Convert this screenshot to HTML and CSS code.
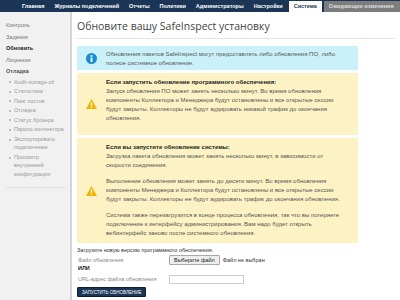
FILE: index.html
```html
<!DOCTYPE html>
<html lang="ru">
<head>
  <meta charset="UTF-8">
  <title>Обновление системы</title>
  <link rel="stylesheet" href="styles.css">
</head>
<body>
  <div class="topbar">
    <a class="nav-item">Главная</a>
    <a class="nav-item">Журналы подключений</a>
    <a class="nav-item">Отчеты</a>
    <a class="nav-item">Политики</a>
    <a class="nav-item">Администраторы</a>
    <a class="nav-item">Настройки</a>
    <a class="nav-item active">Система</a>
    <a class="nav-item pending">Ожидающие изменения</a>
  </div>

  <div class="layout">
    <div class="sidebar">
      <div class="side-link">Контроль</div>
      <div class="side-link">Задания</div>
      <div class="side-link current">Обновить</div>
      <div class="side-link">Лицензия</div>
      <div class="side-link heading">Отладка</div>
      <ul class="side-list">
        <li>Audit-storage-ctl</li>
        <li>Статистика</li>
        <li>Пинг хостов</li>
        <li>Отладка</li>
        <li>Статус брокера</li>
        <li>Пароль коллектора</li>
        <li>Экспортировать подключение</li>
        <li>Просмотр внутренней конфигурации</li>
      </ul>
      <div class="side-rule"></div>
    </div>

    <div class="content">
      <h1>Обновите вашу SafeInspect установку</h1>

      <div class="notice info">
        <div class="notice-icon">
          <svg width="11" height="11" viewBox="0 0 12 12">
            <circle cx="6" cy="6" r="6" fill="#1a8fd0"/>
            <circle cx="6" cy="3.2" r="1.1" fill="#fff"/>
            <rect x="5" y="5" width="2" height="4.8" fill="#fff"/>
          </svg>
        </div>
        <div class="notice-text">
          <p>Обновления пакетов SafeInspect могут предоставлять либо обновления ПО, либо полное системное обновление.</p>
        </div>
      </div>

      <div class="notice warn first">
        <div class="notice-icon">
          <svg width="11" height="10" viewBox="0 0 12 11">
            <path d="M6 0 L12 11 L0 11 Z" fill="#f0b400"/>
            <rect x="5.3" y="3.6" width="1.4" height="4" fill="#fff"/>
            <rect x="5.3" y="8.5" width="1.4" height="1.3" fill="#fff"/>
          </svg>
        </div>
        <div class="notice-text">
          <p><b>Если запустить обновление программного обеспечения:</b><br>
          Запуск обновления ПО может занять несколько минут. Во время обновления компоненты Коллектора и Менеджера будут остановлены и все открытые сессии будут закрыты. Коллекторы не будут аудировать никакой трафик до окончания обновления.</p>
        </div>
      </div>

      <div class="notice warn">
        <div class="notice-icon">
          <svg width="11" height="10" viewBox="0 0 12 11">
            <path d="M6 0 L12 11 L0 11 Z" fill="#f0b400"/>
            <rect x="5.3" y="3.6" width="1.4" height="4" fill="#fff"/>
            <rect x="5.3" y="8.5" width="1.4" height="1.3" fill="#fff"/>
          </svg>
        </div>
        <div class="notice-text">
          <p><b>Если вы запустите обновление системы:</b><br>
          Загрузка пакета обновления может занять несколько минут, в зависимости от скорости соединения.</p>
          <p>Выполнение обновления может занять до десяти минут. Во время обновления компоненты Менеджера и Коллектора будут остановлены и все открытые сессии будут закрыты. Коллекторы не будут аудировать трафик до окончания обновления.</p>
          <p>Система также перезагрузится в конце процесса обновления, так что вы потеряете подключение к интерфейсу администрирования. Вам надо будет открыть вебинтерфейс заново после системного обновления.</p>
        </div>
      </div>

      <form class="upload">
        <div class="upload-title">Загрузите новую версию программного обеспечения.</div>
        <div class="field">
          <label>Файл обновления</label>
          <span class="file-btn">Выберите файл</span>
          <span class="file-name">Файл не выбран</span>
        </div>
        <div class="or">ИЛИ</div>
        <div class="field url">
          <label>URL-адрес файла обновления</label>
          <span class="url-input"></span>
        </div>
        <button type="button" class="submit">Запустить обновление</button>
      </form>
    </div>
  </div>
</body>
</html>
```

FILE: styles.css
```css
body {
  margin: 0;
  padding: 0;
  width: 400px;
  height: 300px;
  overflow: hidden;
  background: #fff;
  font-family: "Liberation Sans", Arial, sans-serif;
  font-size: 6px;
  color: #333;
}

.topbar {
  display: flex;
  align-items: flex-end;
  height: 12px;
  padding-left: 17px;
  background-color: #1b3556;
}

.nav-item {
  display: block;
  padding: 0 5px;
  height: 11px;
  line-height: 11px;
  font-size: 5.5px;
  font-weight: bold;
  color: #fff;
  white-space: nowrap;
}

.nav-item.active {
  margin-left: 1px;
  background-color: #fff;
  color: #1b3556;
}

.nav-item.pending {
  flex: 1;
  margin-left: 2px;
  background-color: #7d7d7d;
  color: #ddd;
}

.layout {
  display: flex;
  height: 288px;
}

.sidebar {
  width: 64px;
  flex-shrink: 0;
  padding: 8px 0 0 6px;
  background-color: #f1f1f1;
  border-right: 2px solid #d4d4d4;
}

.side-link {
  height: 11.5px;
  line-height: 11.5px;
  font-size: 5.5px;
  color: #777;
}

.side-link.current {
  font-weight: bold;
  color: #222;
}

.side-link.heading {
  color: #555;
  font-weight: bold;
}

.side-list {
  margin: 0;
  padding: 0 0 0 8px;
  list-style: none;
}

.side-list li {
  position: relative;
  font-size: 5.5px;
  line-height: 8.4px;
  margin-bottom: 1.2px;
  color: #999;
  padding-right: 2px;
}

.side-list li::before {
  content: "";
  position: absolute;
  left: -5px;
  top: 3.5px;
  width: 2px;
  height: 2px;
  border-radius: 50%;
  background-color: #aaa;
}

.side-rule {
  margin-top: 9px;
  width: 60px;
  border-top: 1px solid #ddd;
}

.content {
  flex: 1;
  padding: 0 0 0 5px;
}

h1 {
  margin: 7px 0 0;
  padding-bottom: 4px;
  border-bottom: 1px solid #e6e6e6;
  font-family: "Open Sans", sans-serif;
  font-weight: normal;
  font-size: 10.5px;
  line-height: 15px;
  color: #444;
  width: 318px;
}

.notice {
  display: flex;
  width: 281px;
  margin-top: 3px;
}

.notice.info {
  margin-top: 7px;
  background-color: #caf1f9;
}

.notice.warn {
  background-color: #fdf2c4;
}

.notice-icon {
  width: 29px;
  flex-shrink: 0;
  display: flex;
  align-items: center;
  justify-content: center;
}

.notice-text {
  padding: 5px 10px 5px 0;
  color: #555;
  font-size: 6px;
  line-height: 9px;
}

.notice.info .notice-text {
  padding-top: 4px;
  padding-bottom: 2px;
}

.notice.first .notice-text {
  padding-bottom: 12px;
}

.notice-text p {
  margin: 0 0 7px;
}

.notice-text p:last-child {
  margin-bottom: 0;
}

.notice-text b {
  color: #222;
}

.upload {
  margin-top: 3px;
}

.upload-title {
  font-size: 5.5px;
  line-height: 8px;
  color: #333;
}

.field {
  display: flex;
  align-items: center;
  height: 10px;
  margin-top: 1px;
}

.field.url {
  margin-top: 2px;
}

.field label {
  width: 91px;
  padding-left: 1px;
  font-size: 5.5px;
  color: #888;
}

.file-btn {
  display: block;
  padding: 1px 4px;
  font-size: 5.5px;
  line-height: 6px;
  color: #222;
  background-color: #eee;
  border: 1px solid #a9a9a9;
  border-radius: 1px;
}

.file-name {
  margin-left: 3px;
  font-size: 5.5px;
  color: #333;
}

.or {
  font-size: 5.5px;
  font-weight: bold;
  color: #222;
  line-height: 7px;
  padding-left: 1px;
}

.url-input {
  display: block;
  width: 73px;
  height: 7px;
  border: 1px solid #ccc;
}

.submit {
  display: block;
  margin-top: 3px;
  padding: 0 4px;
  height: 10px;
  font-family: "Liberation Sans", Arial, sans-serif;
  font-size: 4.5px;
  text-transform: uppercase;
  color: #fff;
  background-color: #1b3556;
  border: 1px solid #0e1f33;
  border-radius: 1px;
}
```
